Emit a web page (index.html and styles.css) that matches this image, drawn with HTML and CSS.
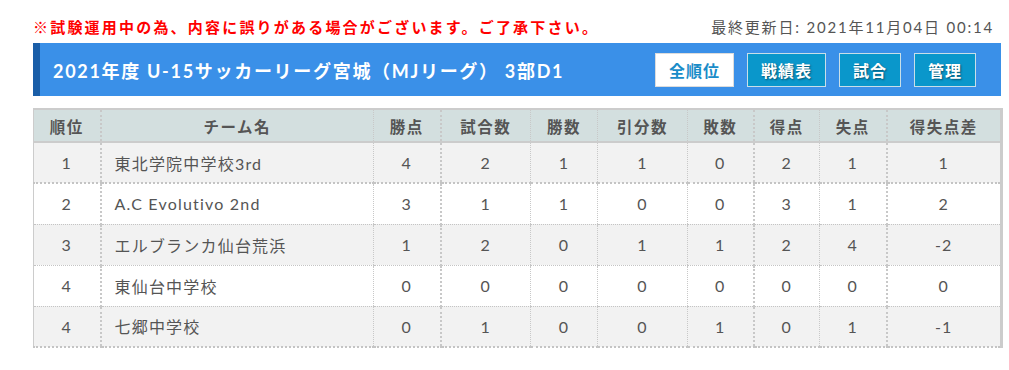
FILE: index.html
```html
<!DOCTYPE html>
<html lang="ja">
<head>
<meta charset="utf-8">
<title>順位表</title>
<link rel="stylesheet" href="styles.css">
</head>
<body>
<div class="page">
  <div class="topline">
    <p class="notice">※試験運用中の為、内容に誤りがある場合がございます。ご了承下さい。</p>
    <p class="updated">最終更新日: 2021年11月04日 00:14</p>
  </div>
  <div class="bar">
    <h1 class="title">2021年度 U-15サッカーリーグ宮城（MJリーグ） 3部D1</h1>
    <nav class="btns">
      <span class="btn btn-active">全順位</span>
      <span class="btn">戦績表</span>
      <span class="btn">試合</span>
      <span class="btn">管理</span>
    </nav>
  </div>
  <table class="standings">
    <colgroup>
      <col class="c1"><col class="c2"><col class="c3"><col class="c4"><col class="c5">
      <col class="c6"><col class="c7"><col class="c8"><col class="c9"><col class="c10">
    </colgroup>
    <thead>
      <tr><th>順位</th><th>チーム名</th><th>勝点</th><th>試合数</th><th>勝数</th><th>引分数</th><th>敗数</th><th>得点</th><th>失点</th><th>得失点差</th></tr>
    </thead>
    <tbody>
      <tr class="first"><td>1</td><td class="team">東北学院中学校3rd</td><td>4</td><td>2</td><td>1</td><td>1</td><td>0</td><td>2</td><td>1</td><td>1</td></tr>
      <tr><td>2</td><td class="team">A.C Evolutivo 2nd</td><td>3</td><td>1</td><td>1</td><td>0</td><td>0</td><td>3</td><td>1</td><td>2</td></tr>
      <tr><td>3</td><td class="team">エルブランカ仙台荒浜</td><td>1</td><td>2</td><td>0</td><td>1</td><td>1</td><td>2</td><td>4</td><td>-2</td></tr>
      <tr><td>4</td><td class="team">東仙台中学校</td><td>0</td><td>0</td><td>0</td><td>0</td><td>0</td><td>0</td><td>0</td><td>0</td></tr>
      <tr class="last"><td>4</td><td class="team">七郷中学校</td><td>0</td><td>1</td><td>0</td><td>0</td><td>1</td><td>0</td><td>1</td><td>-1</td></tr>
    </tbody>
  </table>
</div>
</body>
</html>
```

FILE: styles.css
```css
* { box-sizing: border-box; }
html, body { margin: 0; padding: 0; background: #fff; }
body {
  font-family: Lato, "Noto Sans CJK JP", sans-serif;
  color: #555;
}
.page {
  width: 968px;
  margin-left: 33px;
}
.topline {
  display: flex;
  justify-content: space-between;
  align-items: center;
  padding-top: 17px;
  height: 43px;
  padding-bottom: 6px;
}
.topline p { margin: 0; line-height: 20px; }
.notice {
  color: #f00;
  font-weight: bold;
  font-size: 15px;
  letter-spacing: 2.2px;
  font-family: "Noto Sans CJK JP", sans-serif;
}
.updated {
  font-size: 15px;
  letter-spacing: 1.8px;
  color: #555;
  margin-right: 7px !important;
}
.bar {
  height: 53px;
  background: #3a90e8;
  border-left: 7px solid #1a5ea8;
  display: flex;
  align-items: center;
  justify-content: space-between;
  padding: 0 25px 0 13px;
}
.title {
  margin: 0;
  color: #fff;
  font-size: 18px;
  font-weight: bold;
  letter-spacing: 1.7px;
}
.btns {
  display: flex;
  gap: 13px;
}
.btn {
  display: flex;
  align-items: center;
  justify-content: center;
  height: 34px;
  padding: 0 13px;
  background: #0a97cb;
  border: 1px solid #c9dfe8;
  color: #fff;
  font-weight: bold;
  font-size: 16px;
  letter-spacing: 1px;
  text-shadow: 1px 1px 2px rgba(0,0,0,0.45);
  font-family: "Noto Sans CJK JP", sans-serif;
}
.btn-active {
  background: #fff;
  color: #1a8cc8;
  border-color: #dcdcdc;
  text-shadow: none;
}
.standings {
  margin-top: 12px;
  width: 968px;
  table-layout: fixed;
  border-collapse: collapse;
  border-top: 2px solid #cccccc;
  border-left: 1px solid #cccccc;
  border-right: 3px solid #cccccc;
  border-bottom: 2px dotted #cccccc;
  font-size: 16px;
  letter-spacing: 1.2px;
}
.c1 { width: 67px; } .c2 { width: 273px; } .c3 { width: 67px; } .c4 { width: 90px; }
.c5 { width: 67px; } .c6 { width: 90px; } .c7 { width: 66px; } .c8 { width: 66px; }
.c9 { width: 67px; } .c10 { width: 115px; }
.standings th {
  height: 33px;
  background: #d3dfdf;
  font-weight: bold;
  font-size: 15.5px;
  letter-spacing: 1.5px;
  color: #555;
  border-bottom: 2px solid #cccccc;
  padding: 0;
  font-family: "Noto Sans CJK JP", sans-serif;
}
.standings td {
  height: 41px;
  text-align: center;
  padding: 0;
  border-bottom: 1px dotted #c4c4c4;
}
.standings tbody tr:nth-child(odd) td { background: #f2f2f2; }
.standings tbody tr:nth-child(even) td { background: #fff; }
.standings tr.first td { border-bottom: 2px dotted #c4c4c4; }
.standings tr.last td { border-bottom: 2px dotted #c4c4c4; }
.standings td.team { text-align: left; padding-left: 13px; }
.standings th:nth-child(2), .standings td:nth-child(2),
.standings th:nth-child(4), .standings td:nth-child(4),
.standings th:nth-child(8), .standings td:nth-child(8),
.standings th:nth-child(10), .standings td:nth-child(10) {
  border-left: 2px dotted #c8c8c8;
}
.standings th:nth-child(3), .standings td:nth-child(3),
.standings th:nth-child(5), .standings td:nth-child(5),
.standings th:nth-child(6), .standings td:nth-child(6),
.standings th:nth-child(7), .standings td:nth-child(7),
.standings th:nth-child(9), .standings td:nth-child(9) {
  border-left: 1px dotted #c8c8c8;
}
```
